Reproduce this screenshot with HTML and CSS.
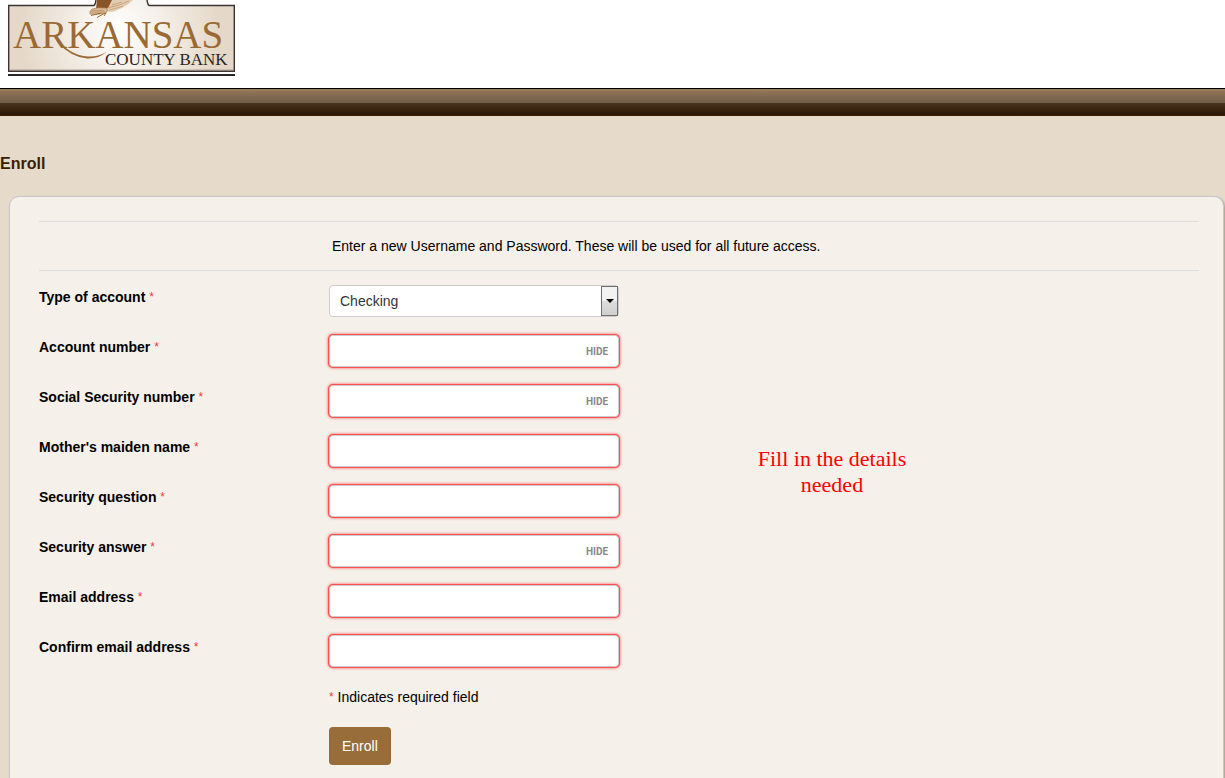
FILE: index.html
```html
<!DOCTYPE html>
<html lang="en">
<head>
    <meta charset="UTF-8">
    <meta name="viewport" content="width=device-width, initial-scale=1.0">
    <title>Enroll - Arkansas County Bank</title>
    <link rel="stylesheet" href="styles.css">
</head>
<body>

<header class="header">
    <svg class="logo" width="228" height="77" viewBox="0 0 228 77" role="img" aria-label="Arkansas County Bank">
        <defs>
            <radialGradient id="plate" gradientUnits="userSpaceOnUse" cx="112" cy="30" r="100">
                <stop offset="0" stop-color="#ffffff"/>
                <stop offset="1" stop-color="#e5d8c8"/>
            </radialGradient>
        </defs>
        <path d="M0.700 5.500H86Q88 4 88 -2H139Q139 4 141 5.500H226.300V71.300H0.700Z" fill="url(#plate)" stroke="#3b3433" stroke-width="1.400"/>
        <path d="M2 70.200H225" stroke="#8b8078"/>
        <rect x="0" y="74" width="227" height="2" fill="#2b2526"/>
        <!-- bird -->
        <path d="M102 0H125Q117 8 104 12L96 11Z" fill="#e3cbb1"/>
        <path d="M89 0H104L100 8Q94 11 88 9Z" fill="#8a5526"/>
        <path d="M98 8Q90 7 84 9Q81 11 82 14Q90 15 98 13Q101 10 98 8Z" fill="#d9b994" stroke="#a8743f" stroke-width="0.600"/>
        <path d="M83 12H97M84 10.500H96M99 8Q111 6 121 1M101 10Q110 8 115 6M104 5L114 2" fill="none" stroke="#b98c5e" stroke-width="0.600"/>
        <path d="M93 13L83 15.500M97 13L89 17.500M98 13L96 16" fill="none" stroke="#9a6a35" stroke-width="1"/>
        <text class="logo-name" x="5" y="48">ARKANSAS</text>
        <path d="M46 36Q62 56 80 56.500Q91 57 99 51.500Q91 59 79 58.500Q63 57 50 43Z" fill="#9a6a35"/>
        <text class="logo-sub" x="97" y="65">COUNTY BANK</text>
    </svg>
</header>
<div class="bar"></div>

<main>
    <h1 class="title">Enroll</h1>
    <form class="panel">
        <p class="intro">Enter a new Username and Password. These will be used for all future access.</p>

        <div class="details">
            <div class="fields">
                <div class="row">
                    <label for="accountType">Type of account <span class="req">*</span></label>
                    <div class="control select">
                        <select id="accountType">
                            <option>Checking</option>
                            <option>Savings</option>
                        </select>
                    </div>
                </div>
                <div class="row">
                    <label for="accountNumber">Account number <span class="req">*</span></label>
                    <div class="control">
                        <input type="text" id="accountNumber" class="invalid">
                        <button type="button" class="hide">HIDE</button>
                    </div>
                </div>
                <div class="row">
                    <label for="ssn">Social Security number <span class="req">*</span></label>
                    <div class="control">
                        <input type="text" id="ssn" class="invalid">
                        <button type="button" class="hide">HIDE</button>
                    </div>
                </div>
                <div class="row">
                    <label for="maidenName">Mother's maiden name <span class="req">*</span></label>
                    <div class="control"><input type="text" id="maidenName" class="invalid"></div>
                </div>
                <div class="row">
                    <label for="question">Security question <span class="req">*</span></label>
                    <div class="control"><input type="text" id="question" class="invalid"></div>
                </div>
                <div class="row">
                    <label for="answer">Security answer <span class="req">*</span></label>
                    <div class="control">
                        <input type="text" id="answer" class="invalid">
                        <button type="button" class="hide">HIDE</button>
                    </div>
                </div>
                <div class="row">
                    <label for="email">Email address <span class="req">*</span></label>
                    <div class="control"><input type="email" id="email" class="invalid"></div>
                </div>
                <div class="row">
                    <label for="confirmEmail">Confirm email address <span class="req">*</span></label>
                    <div class="control"><input type="email" id="confirmEmail" class="invalid"></div>
                </div>
            </div>
            <p class="note">Fill in the details needed</p>
        </div>

        <div class="actions">
            <p class="legend"><span class="req">*</span> Indicates required field</p>
            <button type="submit" class="submit">Enroll</button>
        </div>
    </form>
</main>

</body>
</html>
```
FILE: styles.css
```css
*,
*::before,
*::after {
    box-sizing: border-box;
}
body {
    margin: 0;
    background-color: #E6DACA;
    color: #000000;
    font-family: "Liberation Sans", Arial, sans-serif;
    font-size: 14px;
    line-height: 20px;
}
.header {
    height: 88px;
    padding-left: 8px;
    background-color: #FFFFFF;
}
.logo {
    display: block;
}
.logo-name {
    font-family: "Liberation Serif", serif;
    font-size: 39px;
    fill: #9A6A35;
}
.logo-sub {
    font-family: "Liberation Serif", serif;
    font-size: 17px;
    fill: #2B2526;
}
.bar {
    height: 28px;
    border-top: 1px solid #000000;
    background: linear-gradient(#9B7D5F 0, #8B7054 4px, #6F5D49 14px, #49341D 14px, #2C1905 25px, #3B1D00 27px);
}
.title {
    margin: 38px 0 22px;
    color: #3B1D00;
    font-size: 16px;
    line-height: 20px;
}
.panel {
    margin: 0 1px 0 9px;
    padding: 24px 24px 40px 29px;
    background-color: #F5F0EA;
    border: 1px solid #C8C8CA;
    border-radius: 10px;
    box-shadow: 1px 1px 2px rgba(0, 0, 0, 0.3);
}
.intro {
    margin: 0;
    padding: 14px 0 14px 293px;
    border-top: 1px solid #DDDDDD;
    border-bottom: 1px solid #DDDDDD;
}
.details {
    display: flex;
    align-items: center;
    margin-top: 14px;
}
.row {
    display: flex;
    height: 50px;
}
.row label {
    width: 290px;
    padding-top: 2px;
    font-weight: bold;
}
.req {
    color: #E8403A;
    font-size: 12px;
    font-weight: normal;
    vertical-align: 1px;
}
.control {
    position: relative;
    width: 290px;
}
.control input,
.control select {
    display: block;
    width: 100%;
    height: 32px;
    padding: 0 10px;
    background-color: #FFFFFF;
    border: 1px solid #CCCCCC;
    border-radius: 4px;
    color: #333333;
    font: inherit;
}
.control select {
    appearance: none;
}
/* drop-down button and its arrow */
.select::before {
    content: "";
    position: absolute;
    top: 1px;
    right: 1px;
    width: 17px;
    height: 30px;
    border: 1px solid #707070;
    background: linear-gradient(#F2F2F2 50%, #DDDDDD 50%, #CFCFCF);
    pointer-events: none;
}
.select::after {
    content: "";
    position: absolute;
    top: 14px;
    right: 5px;
    border: 4px solid transparent;
    border-top-color: #000000;
    border-bottom: 0;
    pointer-events: none;
}
.control .invalid {
    box-shadow: 0 0 0 1px #FF5050, 0 0 3px 1px #FF5050;
}
.hide {
    position: absolute;
    top: 7px;
    right: 11px;
    padding: 0;
    border: none;
    background: none;
    color: #888888;
    font-family: Roboto, sans-serif;
    font-size: 10px;
    font-weight: bold;
    line-height: 20px;
}
.note {
    width: 160px;
    margin: 0 0 26px 133px;
    color: #FF0000;
    font-family: "Liberation Serif", serif;
    font-size: 22px;
    line-height: 26px;
    text-align: center;
}
.actions {
    padding-left: 290px;
}
.legend {
    margin: 2px 0 20px;
}
.submit {
    height: 38px;
    padding: 0 13px;
    background-color: #986D39;
    border: none;
    border-radius: 4px;
    color: #FFFFFF;
    font: inherit;
}
```
